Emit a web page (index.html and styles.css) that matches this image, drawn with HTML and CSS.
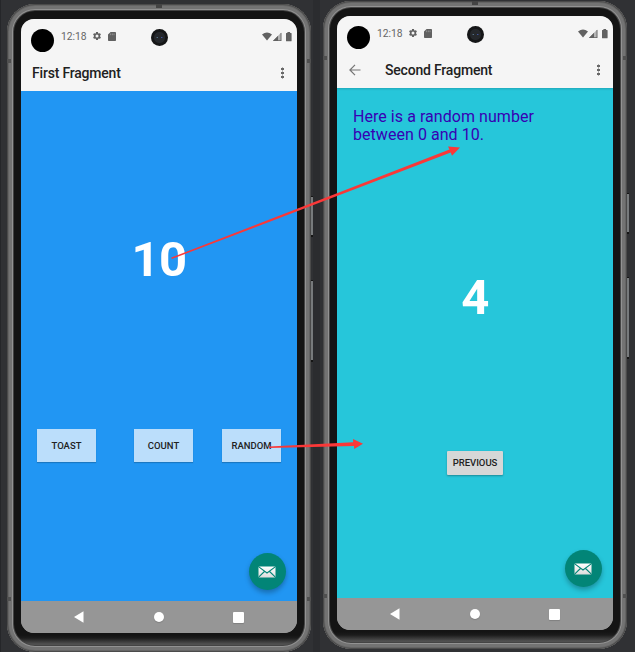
FILE: index.html
```html
<!DOCTYPE html>
<html lang="en">
<head>
<meta charset="utf-8">
<title>Fragments</title>
<link rel="stylesheet" href="styles.css">
</head>
<body>
<svg class="defs" width="0" height="0">
  <defs>
    <linearGradient id="paper" x1="0" y1="0" x2="0" y2="1"><stop offset="0" stop-color="#fff"/><stop offset="1" stop-color="#dcdcdc"/></linearGradient>
    <symbol id="gear" viewBox="0 0 24 24"><path d="M19.14 12.94c.04-.3.06-.61.06-.94s-.02-.64-.07-.94l2.03-1.58a.5.5 0 0 0 .12-.61l-1.92-3.32a.5.5 0 0 0-.59-.22l-2.39.96a7 7 0 0 0-1.62-.94l-.36-2.54a.5.5 0 0 0-.48-.41h-3.84a.5.5 0 0 0-.47.41l-.36 2.54c-.59.24-1.13.57-1.62.94l-2.39-.96a.5.5 0 0 0-.59.22L2.74 8.87a.5.5 0 0 0 .12.61l2.03 1.58a6 6 0 0 0 0 1.88l-2.03 1.58a.5.5 0 0 0-.12.61l1.92 3.32c.12.22.37.29.59.22l2.39-.96c.5.38 1.03.7 1.62.94l.36 2.54c.05.24.24.41.48.41h3.84c.24 0 .44-.17.47-.41l.36-2.54c.59-.24 1.13-.56 1.62-.94l2.39.96c.22.08.47 0 .59-.22l1.92-3.32a.5.5 0 0 0-.12-.61zM12 15.600a3.600 3.600 0 1 1 0-7.200 3.600 3.600 0 0 1 0 7.200z"/></symbol>
    <symbol id="sd" viewBox="0 0 8 9"><path d="M2.600 0H7.200Q8 0 8 .8V8.200Q8 9 7.200 9H.8Q0 9 0 8.200V2.600z"/><path d="M2.600 1.500v1.700M4.300 1.500v1.700M6 1.500v1.700" stroke="#a5a5a5" stroke-width=".7"/></symbol>
    <symbol id="signals" viewBox="0 0 30 10"><path d="M0 2.500Q5 -1.300 10 2.500L5 8.600z"/><path d="M10.800 9L19.300.4V9z" fill="#b5b5b5"/><path d="M10.800 9L16 3.800V9zM18.600 1h.8v8h-3.500v-.8h2.700z"/><path d="M24.400 1h1V0h2.700v1h1q.5 0 .5.500v7.200q0 .6-.6.600h-4.400q-.6 0-.6-.6V1.500q0-.5.400-.5z"/></symbol>
    <symbol id="mail" viewBox="0 0 18 12"><rect x=".5" y=".5" width="17" height="11" rx="1" fill="url(#paper)"/><path d="M.8.9L9 7 17.200.9M.9 10.800L6.400 5.500M17.100 10.800L11.600 5.500" fill="none" stroke="#028577" stroke-width="1.100"/></symbol>
  </defs>
</svg>
<main class="desk">
  <section class="phone first">
    <i class="seam seam-top"></i><i class="key volume"></i><i class="key power"></i>
    <div class="screen">
      <header class="appbar">
        <div class="status"><i class="punch"></i><span class="time">12:18</span><svg class="gear"><use href="#gear"/></svg><svg class="sd"><use href="#sd"/></svg><i class="camera"></i><svg class="signals"><use href="#signals"/></svg></div>
        <div class="toolbar"><h1>First Fragment</h1><i class="more"></i></div>
      </header>
      <div class="content blue">
        <div class="number">10</div>
        <div class="actions"><button>TOAST</button><button>COUNT</button><button>RANDOM</button></div>
        <div class="fab"><svg width="18" height="12"><use href="#mail"/></svg></div>
      </div>
      <nav class="nav"><svg width="10" height="12"><path d="M0 6L9.500.3v11.400z"/></svg><i class="home"></i><i class="recent"></i></nav>
    </div>
  </section>
  <section class="phone second">
    <i class="seam seam-top"></i><i class="key volume"></i><i class="key power"></i>
    <div class="screen">
      <header class="appbar">
        <div class="status"><i class="punch"></i><span class="time">12:18</span><svg class="gear"><use href="#gear"/></svg><svg class="sd"><use href="#sd"/></svg><i class="camera"></i><svg class="signals"><use href="#signals"/></svg></div>
        <div class="toolbar"><svg class="back" width="12" height="12"><path d="M11.500 6H1M6 .8L.9 6 6 11.200"/></svg><h1>Second Fragment</h1><i class="more"></i></div>
      </header>
      <div class="content cyan">
        <p>Here is a random number<br>between 0 and 10.</p>
        <div class="number">4</div>
        <button class="previous">PREVIOUS</button>
        <div class="fab"><svg width="18" height="12"><use href="#mail"/></svg></div>
      </div>
      <nav class="nav"><svg width="10" height="12"><path d="M0 6L9.500.3v11.400z"/></svg><i class="home"></i><i class="recent"></i></nav>
    </div>
  </section>
</main>
<svg class="arrows" width="635" height="652"><path d="M171.300 257.600L449.500 149.500 448 146.500 460 147.500 452 155.800 450.700 152.600 171.800 259z"/><path d="M269 446.400L353.200 442.200 353 439 363 443.800 354.200 449 354 445.900 269 447.900z"/></svg>
</body>
</html>
```

FILE: styles.css
```css
*, *::before, *::after { box-sizing: border-box; }
body { margin: 0; width: 635px; height: 652px; overflow: hidden; background: #2f3033; font-family: Roboto, sans-serif; color: #212121; }
.defs { position: absolute; }
.desk { display: flex; gap: 12px; height: 652px; padding-left: 7px; align-items: flex-start; background: linear-gradient(90deg, #252629 1px, #303134 1px 313px, #2b2c2f 313px 320px, #303134 320px); }
.phone {
  position: relative; flex: none; width: 304px; height: 648px; padding: 15px 14px 19px; border-radius: 28px;
  background: linear-gradient(#141414 0 631px, #1c1c1c 634px, #505050 640px);
  box-shadow: inset 0 0 0 1px #4a4a4a, inset 0 0 0 2px #656565, inset 0 0 0 5px #737373, inset 0 0 0 6px #929292, inset 0 0 0 7px #444;
}
.first { margin-top: 4px; }
.second { margin-top: 1px; }
.seam { position: absolute; }
.seam-top { left: 149px; top: 0; width: 6px; height: 4px; background: #444; }
.seam-top::before, .seam-top::after { content: ""; position: absolute; left: -149px; top: 55px; width: 304px; height: 4px; border: solid #505050; border-width: 0 4px; }
.seam-top::after { top: 593px; }
.key { position: absolute; left: 304px; width: 2px; background: #777a7c; border: solid #151515; border-width: 1px 0 2px; }
.volume { top: 192px; height: 41px; }
.power { top: 276px; height: 82px; }
.screen { display: flex; flex-direction: column; width: 276px; height: 614px; overflow: hidden; border-radius: 13px; background: #969696; }
.appbar { flex: none; height: 72px; background: #f5f5f5; position: relative; z-index: 1; }
.second .appbar { box-shadow: 0 1px 2px rgba(0, 0, 0, .16); }
.status { display: flex; align-items: flex-start; height: 35px; fill: #616161; }
.punch { width: 23px; height: 23px; margin: 10px 0 0 10px; border-radius: 50%; background: #000; }
.time { width: 25px; margin: 11px 0 0 7px; font-size: 10.300px; line-height: 14px; color: #666; white-space: nowrap; }
.gear { width: 10px; height: 10px; margin: 12px 0 0 6px; }
.sd { width: 8px; height: 9px; margin: 13px 0 0 6px; }
.camera { width: 17px; height: 17px; margin: 10px 0 0 35px; border-radius: 50%; background: radial-gradient(circle at 37% 50%, #526f84 0 .5px, transparent 1px), radial-gradient(circle at 63% 50%, #4055a0 0 .5px, transparent 1px), radial-gradient(#25282c 0 5px, #151617 6px); }
.signals { width: 30px; height: 10px; margin: 13px 0 0 94px; }
.toolbar { display: flex; align-items: center; height: 37px; padding: 0 13px 0 11px; }
h1 { flex: 1; margin: 0; font-size: 14px; font-weight: 500; line-height: 18px; letter-spacing: -.2px; white-space: nowrap; }
.back { margin: 0 24px 0 1px; fill: none; stroke: #757575; stroke-width: 1.200; }
.more { width: 3px; height: 12px; background: radial-gradient(circle, #686868 1.300px, transparent 1.700px) 0 0 / 3px 4px; }
.content { flex: none; position: relative; height: 510px; display: flex; flex-direction: column; }
.blue { background: #2196f3; }
.cyan { background: #26c6da; align-items: center; }
.number { width: 100%; text-align: center; color: #fff; font-size: 49px; line-height: 56px; font-weight: 700; letter-spacing: -.5px; }
.blue .number { margin-top: 141px; }
.cyan .number { margin-top: 126px; }
p { align-self: stretch; margin: 20px 0 0 16px; font-size: 16px; line-height: 18px; letter-spacing: .05px; color: #3700b3; height: 36px; white-space: nowrap; }
button { display: block; border: 0; padding: 0; font: 500 9.500px/12px Roboto, sans-serif; color: #212121; }
.actions { display: flex; justify-content: space-between; padding: 0 16px; margin-top: 141px; }
.actions button { width: 59px; height: 33px; background: #bbdefb; box-shadow: 0 1px 1px rgba(0, 0, 0, .2); }
.actions button:nth-child(2) { margin-left: 9px; }
.previous { width: 56px; height: 24px; margin-top: 125px; background: #d6d7d7; border-radius: 1px; box-shadow: 0 1px 2px rgba(0, 0, 0, .3); }
.fab { position: absolute; right: 11px; bottom: 11px; width: 37px; height: 37px; padding-right: 1px; border-radius: 50%; background: #028577; display: flex; align-items: center; justify-content: center; box-shadow: 0 3px 5px rgba(0, 0, 0, .27); }
.nav { flex: none; display: flex; align-items: center; height: 32px; padding-left: 53px; background: #969696; fill: #fff; }
.home { width: 10px; height: 10px; margin-left: 70px; border-radius: 50%; background: #fff; box-shadow: 0 1px 1px rgba(0, 0, 0, .15); }
.recent { width: 11px; height: 11px; margin-left: 69px; border-radius: 1px; background: #fff; box-shadow: 0 1px 1px rgba(0, 0, 0, .15); }
.arrows { position: absolute; left: 0; top: 0; fill: #fa3838; }
```
